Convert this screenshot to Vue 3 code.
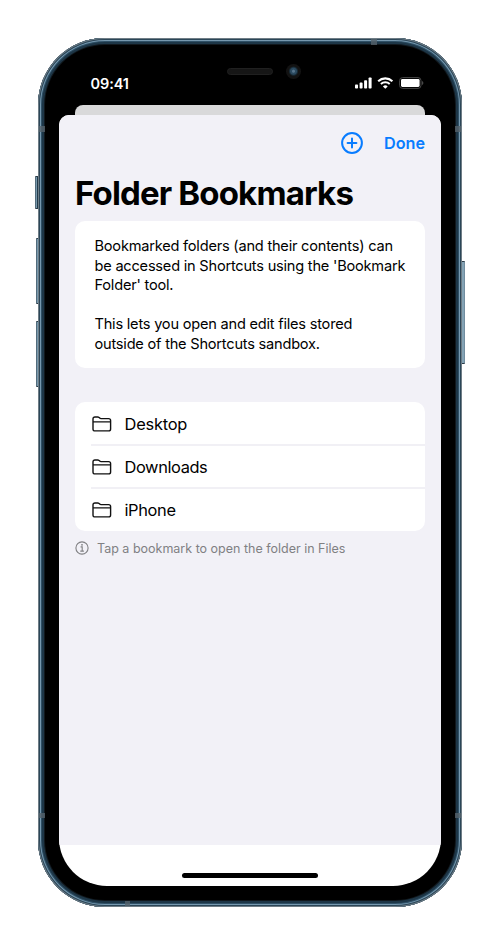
<script setup>
const folders = ['Desktop', 'Downloads', 'iPhone']
const intro = [
  'Bookmarked folders (and their contents) can',
  "be accessed in Shortcuts using the 'Bookmark",
  "Folder' tool.",
  '\u00a0',
  'This lets you open and edit files stored',
  'outside of the Shortcuts sandbox.',
]
</script>

<template>
  <main class="stage">
    <div class="phone">
      <i class="key mute"></i>
      <i class="key vol-up"></i>
      <i class="key vol-down"></i>
      <i class="key power"></i>
      <div class="frame">
        <i class="band band-top"></i>
        <i class="band band-left"></i>
        <i class="band band-right"></i>
        <i class="band band-left-low"></i>
        <i class="band band-right-low"></i>
        <i class="band band-bottom"></i>
        <header class="status">
          <span class="time">09:41</span>
          <div class="notch"><i class="speaker"></i><i class="camera"></i></div>
          <div class="signals">
            <svg class="cell" width="17" height="12" viewBox="0 0 17 12" fill="#fff">
              <rect x="0" y="7.6" width="3" height="4" rx=".8" />
              <rect x="4.6" y="5.6" width="3" height="6" rx=".8" />
              <rect x="9.1" y="3.2" width="3" height="8.4" rx=".8" />
              <rect x="13.6" y=".5" width="3" height="11.1" rx=".8" />
            </svg>
            <svg class="wifi" width="17" height="12" viewBox="0 0 17 12" fill="none" stroke="#fff">
              <path d="M1.2 4.2a10.4 10.4 0 0 1 14.2 0" stroke-width="2.1" />
              <path d="M3.9 7a6.5 6.5 0 0 1 8.8 0" stroke-width="2" />
              <path d="M8.3 11.8 5.9 9.4a3.6 3.6 0 0 1 4.8 0z" fill="#fff" stroke="none" />
            </svg>
            <svg class="battery" width="25" height="12" viewBox="0 0 25 12">
              <rect x=".6" y=".6" width="21.4" height="10.8" rx="3" fill="none" stroke="#484848" />
              <rect x="2" y="2" width="18.6" height="8" rx="1.4" fill="#fff" />
              <path d="M23 4v4q1.4-.7 1.4-2T23 4z" fill="#484848" />
            </svg>
          </div>
        </header>
        <div class="behind"></div>
        <section class="screen">
          <div class="sheet">
            <nav class="bar">
              <svg class="add" width="24" height="24" viewBox="0 0 24 24" fill="none" stroke="#087cff" stroke-width="2" stroke-linecap="round">
                <circle cx="12" cy="12" r="9.9" />
                <path d="M12 7.6v8.8M7.6 12h8.8" />
              </svg>
              <span class="done">Done</span>
            </nav>
            <h1>Folder Bookmarks</h1>
            <div class="card intro">
              <div v-for="(line, i) in intro" :key="i" class="line">{{ line }}</div>
            </div>
            <div class="card list">
              <div v-for="name in folders" :key="name" class="row">
                <svg width="20" height="16" viewBox="0 0 20 16" fill="none" stroke="#111" stroke-width="1.4" stroke-linejoin="round">
                  <path d="M1 12.6V3Q1 1 3 1h2.7q.8 0 1.4.5l.6.6q.5.5 1.3.5h7.6q2 0 2 2v8.3q0 2-2 2H3q-2 0-2-2zM1 5.9h17.6" />
                </svg>
                <span class="name" :class="name.toLowerCase()">{{ name }}</span>
              </div>
            </div>
            <footer class="hint">
              <svg width="14" height="14" viewBox="0 0 14 14" fill="none" stroke="#808083" stroke-width="1.1">
                <circle cx="7" cy="7" r="6.1" />
                <path d="M5.6 5.9h1.6v4M5.3 10.1h3.6" />
                <circle cx="7" cy="3.8" r=".9" fill="#808083" stroke="none" />
              </svg>
              <span>Tap a bookmark to open the folder in Files</span>
            </footer>
          </div>
          <div class="bottom"><i class="home"></i></div>
        </section>
      </div>
    </div>
  </main>
</template>

<style>
body { margin: 0; background: #fff; }
</style>

<style scoped>
* { box-sizing: border-box; }
.stage {
  width: 500px;
  height: 945px;
  padding: 38px 38px 0;
  background: #fff;
  font-family: Inter, "Liberation Sans", sans-serif;
  color: #000;
  overflow: hidden;
}
.phone { position: relative; width: 424px; height: 869px; }
.frame {
  position: relative;
  height: 869px;
  padding: 7px 21px 0;
  border-radius: 67px;
  background: #000;
  box-shadow: inset 0 0 0 1px #6f7d86, inset 0 0 0 2px #2b4658, inset 0 0 0 3px #7698ae,
    inset 0 0 0 4px #2f5066, inset 0 0 0 6px #1d3647, inset 0 0 0 7px #11181d;
  overflow: hidden;
}
.key { position: absolute; border-radius: 1px; background: linear-gradient(90deg, #526b7b 0 1px, #7899ad 1px 2px, #253c4b 2px); border: solid #2b3c48; border-width: 1px 0; }
.mute { left: -3px; top: 138px; width: 5px; height: 33px; }
.vol-up { left: -2px; top: 200px; width: 4px; height: 66px; }
.vol-down { left: -2px; top: 283px; width: 4px; height: 66px; }
.power { right: -3px; top: 223px; width: 5px; height: 103px; background: linear-gradient(270deg, #718d9f 0 1px, #84a3b5 1px 3px, #253c4b 3px); }
.band { position: absolute; background: #56636b; opacity: .8; }
.band-top { left: 333px; top: 1px; width: 6px; height: 6px; }
.band-left { left: 1px; top: 88px; width: 6px; height: 6px; }
.band-right { right: 1px; top: 88px; width: 6px; height: 6px; }
.band-left-low { left: 1px; top: 775px; width: 6px; height: 5px; }
.band-right-low { right: 1px; top: 775px; width: 6px; height: 5px; }
.band-bottom { left: 87px; bottom: 1px; width: 5px; height: 5px; }
.status {
  display: grid;
  grid-template-columns: 168px 76px 1fr;
  height: 60px;
  color: #fff;
}
.time { padding: 29px 0 0 31.5px; font-size: 14.5px; line-height: 20px; font-weight: 600; letter-spacing: -.1px; }
.notch { display: flex; align-items: center; justify-content: space-between; height: 16px; margin-top: 18px; }
.speaker { width: 46px; height: 7px; border-radius: 4px; background: #161616; border: 1px solid #202020; }
.camera { width: 15px; height: 15px; margin-right: 2px; border-radius: 50%; background: radial-gradient(circle at 50% 48%, #57758c 0 1px, #2b4a60 2px 3px, #182b37 4px, #121212 5px); }
.signals { display: flex; gap: 5px; padding: 32px 0 0 52px; }
.behind { height: 10px; margin: 0 16px; border-radius: 8px 8px 0 0; background: #d9d9da; }
.screen { height: 771px; overflow: hidden; border-radius: 10px 10px 48px 48px; background: #fff; }
.sheet { height: 730px; padding: 15px 16px 0; background: #f2f1f7; }
.bar { display: flex; align-items: center; justify-content: flex-end; gap: 20px; height: 26px; color: #087cff; }
.done { font-size: 16.2px; line-height: 24px; font-weight: 600; }
h1 { height: 42px; margin: 16px 0 0; font-size: 33px; line-height: 42px; font-weight: 700; letter-spacing: -.85px; white-space: nowrap; }
.card { background: #fff; border-radius: 10px; }
.intro { height: 147px; margin-top: 7px; padding: 16px 0 0 19.5px; }
.line { height: 19.6px; line-height: 19.6px; font-size: 14.6px; letter-spacing: -.22px; white-space: nowrap; }
.list { height: 129px; margin-top: 34px; padding-top: 1px; }
.row { display: flex; align-items: center; gap: 12.5px; height: 43px; margin-left: 16px; padding-left: 1px; border-bottom: 2px solid #f1f0f5; }
.row:last-child { height: 42px; border-bottom: 0; }
.name { font-size: 16.4px; line-height: 22px; letter-spacing: -.2px; }
.downloads { letter-spacing: -.38px; }
.iphone { letter-spacing: -.35px; }
.hint { display: flex; align-items: center; gap: 8px; height: 20px; margin-top: 7px; color: #808083; font-size: 12.5px; white-space: nowrap; }
.bottom { display: flex; justify-content: center; height: 41px; padding-top: 28px; }
.home { width: 136px; height: 5px; border-radius: 3px; background: #000; }
</style>
